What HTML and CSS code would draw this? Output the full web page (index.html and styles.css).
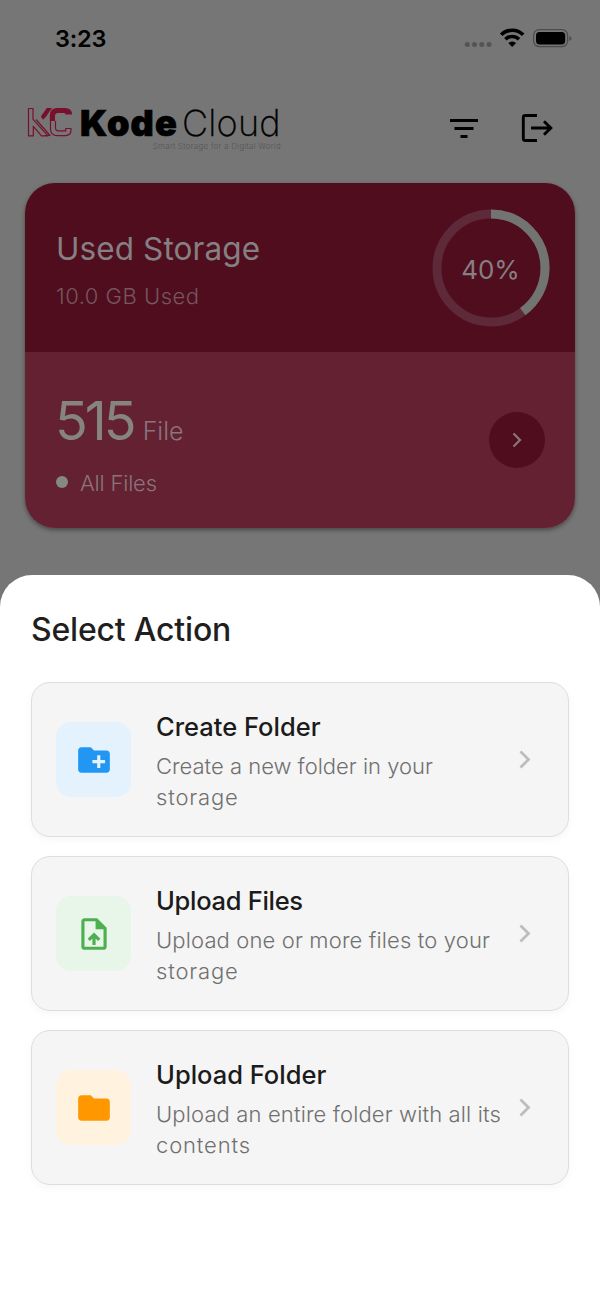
FILE: index.html
```html
<!DOCTYPE html>
<html lang="en">
<head>
<meta charset="utf-8">
<title>KodeCloud</title>
<link rel="stylesheet" href="styles.css">
</head>
<body>
<section class="home">
  <div class="status">
    <span class="time">3:23</span>
    <svg class="status-icons" width="108" height="22" viewBox="464 27 108 22">
      <g fill="#545454"><circle cx="467.3" cy="44.5" r="2.5"/><circle cx="474.5" cy="44.5" r="2.5"/><circle cx="481.8" cy="44.5" r="2.5"/><circle cx="489" cy="44.5" r="2.5"/></g>
      <g fill="none" stroke="#000" stroke-width="3.6"><path d="M501.200 34.800a15.500 15.500 0 0 1 22 0"/><path d="M505.400 39.300a9.600 9.600 0 0 1 13.600 0"/></g>
      <path d="M508.300 43a5.700 5.700 0 0 1 7.800 0l-3.900 3.900z"/>
      <rect x="533.600" y="29.600" width="34" height="17" rx="5.500" fill="none" stroke="#4b4b4b" stroke-width="1.200"/>
      <rect x="536" y="32" width="29.200" height="12.400" rx="3.600"/>
      <path d="M569.400 36v5q2-.7 2-2.500t-2-2.500z" fill="#4b4b4b"/>
    </svg>
  </div>
  <header class="header">
    <svg class="mark" width="46" height="30" viewBox="27 107 46 30">
      <g fill="none" stroke="#780f2d" stroke-width="1.200" stroke-linejoin="round">
        <path d="M28.500 108.500h4.500v10.800l15 16.500h-6.500l-8.200-9.500v9.500h-4.800z"/>
        <path d="M36 119.500l14 16h-5"/>
        <path d="M50.500 121v8q0 6.600 7 6.600h8q5.500 0 5.500-5.500v-1.600h-5.300v2.300h-8.200q-2-.4-2-2.500v-7.300"/>
      </g>
      <path fill="#780f2d" d="M40.800 116.500l6-8.500h5.200l-6 8.800-3 3z"/>
      <path fill="#780f2d" d="M49.800 121v-5.500q0-7.500 7.500-7.500h7.700q7 0 7 6.500h-6.300l-1.200-1.500h-6.300q-3.200 0-3.200 3.200v4.800z"/>
    </svg>
    <div class="brand">
      <div class="name"><span class="kode">Kode</span><span class="cloud">Cloud</span></div>
      <div class="tagline">Smart Storage for a Digital World</div>
    </div>
    <svg class="filter" width="28" height="20" viewBox="0 0 28 20"><path d="M0 0h28v3H0zM4.500 8h19v3h-19zM10.500 16h7v3h-7z"/></svg>
    <svg class="logout" width="32" height="30" viewBox="0 0 32 30"><path d="M16 2.500H4.300q-2 0-2 2v21q0 2 2 2H16M10 15h19M23 8.200l6.800 6.800-6.800 6.800" fill="none" stroke="#000" stroke-width="2.900"/></svg>
  </header>
  <div class="storage">
    <div class="usage">
      <div class="usage-text">
        <div class="usage-title">Used Storage</div>
        <div class="usage-sub">10.0 GB Used</div>
      </div>
      <div class="ring">
        <svg width="118" height="118" viewBox="0 0 118 118"><g fill="none" stroke-width="9"><circle cx="59" cy="59" r="54" stroke="#5e2938"/><circle cx="59" cy="59" r="54" stroke="#727472" pathLength="100" stroke-dasharray="40 60" transform="rotate(-90 59 59)"/></g></svg>
        <span class="percent">40%</span>
      </div>
    </div>
    <div class="files">
      <div class="files-text">
        <div class="count-row"><span class="count">515</span><span class="unit">File</span></div>
        <div class="all"><i class="dot"></i><span class="all-text">All Files</span></div>
      </div>
      <div class="go"><svg width="10" height="16" viewBox="0 0 10 16"><path d="M1.500 1.500L8 8l-6.500 6.500" fill="none" stroke="#8d747b" stroke-width="2.200"/></svg></div>
    </div>
  </div>
</section>
<main class="sheet">
  <h1 class="sheet-title">Select Action</h1>
  <div class="action">
    <div class="tile blue"><svg width="38" height="38" viewBox="0 0 24 24"><path fill="#2196f3" d="M20 6h-8l-2-2H4c-1.110 0-1.990.89-1.990 2L2 18c0 1.110.89 2 2 2h16c1.110 0 2-.89 2-2V8c0-1.110-.89-2-2-2zm-1 8h-3v3h-2v-3h-3v-2h3V9h2v3h3v2z"/></svg></div>
    <div class="copy"><div class="title">Create Folder</div><div class="desc"><span>Create a new folder in your</span><br><span class="last-line">storage</span></div></div>
    <svg class="chevron" width="12" height="19" viewBox="0 0 12 19"><path d="M1.500 1.500l8 8-8 8" fill="none" stroke="#bdbdbd" stroke-width="2.800"/></svg>
  </div>
  <div class="action">
    <div class="tile green"><svg width="38" height="38" viewBox="0 0 24 24"><path fill="#4caf50" d="M14 2H6c-1.100 0-1.990.9-1.990 2L4 20c0 1.100.89 2 1.990 2H18c1.100 0 2-.9 2-2V8l-6-6zm4 18H6V4h7v5h5v11zM8 15.010l1.410 1.410L11 14.840V19h2v-4.160l1.590 1.590L16 15.010 12.010 11 8 15.010z"/></svg></div>
    <div class="copy"><div class="title tight">Upload Files</div><div class="desc"><span class="wide">Upload one or more files to your</span><br><span class="last-line">storage</span></div></div>
    <svg class="chevron" width="12" height="19" viewBox="0 0 12 19"><path d="M1.500 1.500l8 8-8 8" fill="none" stroke="#bdbdbd" stroke-width="2.800"/></svg>
  </div>
  <div class="action">
    <div class="tile orange"><svg width="38" height="38" viewBox="0 0 24 24"><path fill="#ff9800" d="M10 4H4c-1.100 0-1.990.9-1.990 2L2 18c0 1.100.9 2 2 2h16c1.100 0 2-.9 2-2V8c0-1.100-.9-2-2-2h-8l-2-2z"/></svg></div>
    <div class="copy"><div class="title">Upload Folder</div><div class="desc"><span class="wide">Upload an entire folder with all its</span><br><span class="last-line">contents</span></div></div>
    <svg class="chevron" width="12" height="19" viewBox="0 0 12 19"><path d="M1.500 1.500l8 8-8 8" fill="none" stroke="#bdbdbd" stroke-width="2.800"/></svg>
  </div>
</main>
</body>
</html>
```
FILE: styles.css
```css
* { box-sizing: border-box; }
body { margin: 0; width: 600px; height: 1299px; overflow: hidden; background: #767676; font-family: Inter, "Liberation Sans", sans-serif; display: flex; flex-direction: column; white-space: nowrap; }
svg { display: block; flex: none; }
.home { height: 575px; padding: 0 25px; flex: none; }
.status { height: 76px; padding: 0 3px 0 30px; display: flex; align-items: center; justify-content: space-between; }
.time { font-size: 23.5px; font-weight: 600; letter-spacing: -0.2px; }
.header { height: 107px; padding: 0 21px 0 2px; display: flex; align-items: center; }
.mark { margin: -15px 7px 0 0; }
.brand { width: 202px; margin-top: -6px; }
.name { height: 38px; line-height: 40px; font-size: 36px; display: flex; }
.kode { width: 102px; font-weight: 900; letter-spacing: 1.1px; -webkit-text-stroke: 0.7px #000; }
.cloud { font-weight: 200; letter-spacing: 0.2px; -webkit-text-stroke: 0.3px #000; }
.tagline { font-size: 8px; line-height: 10px; font-weight: 200; letter-spacing: 0.3px; text-align: right; padding-right: 1px; color: #444; }
.filter { margin-left: 168px; margin-top: -2px; }
.logout { margin-left: 43px; margin-top: -3px; }
.storage { height: 345px; border-radius: 30px; overflow: hidden; box-shadow: 0 2px 4px rgba(0,0,0,.4); }
.usage { height: 169px; background: #500d1e; padding: 0 25.5px 0 31px; display: flex; justify-content: space-between; align-items: center; }
.usage-text { padding-top: 3px; }
.usage-title { font-size: 31.5px; line-height: 40px; letter-spacing: 0.1px; color: #858083; }
.usage-sub { margin-top: 13px; font-size: 22px; line-height: 28px; font-weight: 300; letter-spacing: 0.5px; color: #765660; }
.ring { display: grid; place-items: center; }
.ring > * { grid-area: 1 / 1; }
.percent { font-size: 26px; color: #858083; padding-top: 3px; }
.files { height: 176px; background: #642132; padding: 0 30px 0 31px; display: flex; justify-content: space-between; align-items: center; }
.files-text { padding-top: 5px; }
.count-row { display: flex; align-items: baseline; height: 64px; line-height: 64px; color: #858480; }
.count { font-size: 54px; letter-spacing: -3px; margin-left: -1px; }
.unit { font-size: 25px; font-weight: 300; margin-left: 9px; color: #8a757c; }
.all { display: flex; align-items: center; height: 28px; margin-top: 15px; font-size: 22px; font-weight: 300; letter-spacing: -0.2px; color: #8a757c; }
.all-text { padding-top: 2px; }
.dot { width: 12px; height: 12px; border-radius: 50%; background: #858885; margin-right: 12px; }
.go { width: 56px; height: 56px; border-radius: 50%; background: #500d1e; display: grid; place-items: center; }
.sheet { flex: 1; background: #fff; border-radius: 32px 32px 0 0; padding: 35px 31px 0; }
.sheet-title { margin: 0 0 32px; font-size: 32px; line-height: 40px; font-weight: 500; letter-spacing: -0.2px; color: #1f1f1f; }
.action { height: 155px; margin-bottom: 19px; padding: 0 37px 0 24px; display: flex; align-items: center; background: #f5f5f5; border: 1px solid #dedede; border-radius: 19px; box-shadow: 0 3px 8px rgba(0,0,0,.035); }
.tile { width: 75px; height: 75px; flex: none; border-radius: 15px; display: grid; place-items: center; }
.blue { background: #e3f2fd; }
.green { background: #e8f5e9; }
.orange { background: #fff3e0; }
.copy { margin-left: 25px; width: 363px; padding-top: 4px; }
.title { font-size: 25.5px; line-height: 32px; font-weight: 500; color: #1b1b1b; margin-bottom: 8px; }
.tight { letter-spacing: -0.3px; }
.desc { font-size: 22px; line-height: 31px; font-weight: 300; color: #707070; }
.wide { letter-spacing: 0.14px; }
.last-line { letter-spacing: 0.85px; }
```
